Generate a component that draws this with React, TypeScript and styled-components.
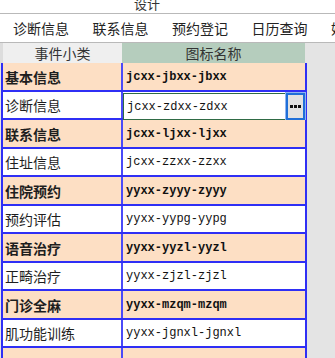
import React from "react";
import styled, { createGlobalStyle } from "styled-components";

const GlobalStyle = createGlobalStyle`
  html, body { margin: 0; padding: 0; background: #ffffff; }
  body { font-family: "Noto Sans CJK SC", "Noto Sans", sans-serif; }
  * { box-sizing: border-box; }
`;

const CJK = `"Noto Sans CJK SC", "Noto Sans", sans-serif`;
const MONO = `"Liberation Mono", "Noto Sans CJK SC", monospace`;
const BLUE = "#2f2ff5";
const PEACH = "#fddfc4";

const Frame = styled.div`
  width: 335px;
  height: 358px;
  overflow: hidden;
  display: flex;
  flex-direction: column;
  background: #ffffff;
`;

const TitleBar = styled.div`
  height: 14px;
  overflow: hidden;
  display: flex;
  justify-content: flex-start;
  padding-left: 134px;
  border-bottom: 1px solid #b9b9b9;
  background: #ffffff;
`;

const TitleText = styled.span`
  display: block;
  margin-top: -4px;
  font-family: ${CJK};
  font-size: 13px;
  line-height: 16px;
  color: #333333;
`;

const MenuBar = styled.div`
  height: 29px;
  display: flex;
  align-items: center;
  gap: 23.5px;
  padding-left: 13px;
  border-bottom: 1px solid #b9b9b9;
  white-space: nowrap;
  overflow: hidden;
  background: #ffffff;
`;

const MenuItem = styled.span`
  flex: none;
  font-family: ${CJK};
  font-size: 14px;
  line-height: 16px;
  color: #222222;
`;

const GridArea = styled.div`
  flex: 1;
  display: flex;
  background: #e4e4e4;
  overflow: hidden;
`;

const Table = styled.div`
  width: 307px;
  flex: none;
  display: flex;
  flex-direction: column;
`;

const HeaderRow = styled.div`
  height: 22px;
  display: grid;
  grid-template-columns: 122px 1fr;
`;

const HeaderCell = styled.div<{ $green?: boolean }>`
  display: flex;
  align-items: center;
  justify-content: center;
  font-family: ${CJK};
  font-size: 14px;
  color: #333333;
  background: ${(p) => (p.$green ? "#b5cdbd" : "#efefef")};
  border-left: ${(p) => (p.$green ? "none" : "3px solid #dddddd")};
  margin-right: ${(p) => (p.$green ? "2px" : "0")};
`;

const Row = styled.div<{ $tall: boolean; $hl: boolean }>`
  height: ${(p) => (p.$tall ? 29 : 28)}px;
  flex: none;
  display: grid;
  grid-template-columns: 120px 1fr;
  margin-left: 1px;
  background: ${(p) => (p.$hl ? PEACH : "#ffffff")};
  border-left: 2px solid ${BLUE};
  border-right: 2px solid ${BLUE};
  border-bottom: 2px solid ${BLUE};
`;

const NameCell = styled.div<{ $bold: boolean }>`
  display: flex;
  align-items: center;
  padding-left: 2px;
  font-family: ${CJK};
  font-size: 14px;
  font-weight: ${(p) => (p.$bold ? 700 : 400)};
  color: #1e1e1e;
  border-right: 2px solid #4a4af8;
  white-space: nowrap;
  overflow: hidden;
`;

const CodeCell = styled.div<{ $bold: boolean }>`
  display: flex;
  align-items: center;
  padding-left: 3px;
  font-family: ${MONO};
  font-size: 12px;
  font-weight: ${(p) => (p.$bold ? 700 : 400)};
  color: #111111;
  white-space: nowrap;
  overflow: hidden;
`;

const EditCell = styled.div`
  display: flex;
  align-items: stretch;
  padding: 1px 0 0 0;
  margin-bottom: -2px;
`;

const EditBox = styled.div`
  flex: 1;
  display: flex;
  align-items: center;
  padding-left: 3px;
  border: 1px solid #2f6b45;
  background: #ffffff;
  font-family: ${MONO};
  font-size: 12px;
  color: #111111;
  white-space: nowrap;
`;

const DotsButton = styled.div`
  width: 19px;
  flex: none;
  display: flex;
  align-items: center;
  justify-content: center;
  gap: 1px;
  background: #e2e2e2;
  border: 2px solid #1f6fd8;
  box-shadow: 0 0 0 1px #8fb4f0;
`;

const Dot = styled.span`
  width: 3px;
  height: 3px;
  background: #111111;
`;

const Side = styled.div`
  flex: 1;
  background: #e4e4e4;
`;

type Item = { name: string; code: string; hl: boolean; edit?: boolean };

const items: Item[] = [
  { name: "基本信息", code: "jcxx-jbxx-jbxx", hl: true },
  { name: "诊断信息", code: "jcxx-zdxx-zdxx", hl: false, edit: true },
  { name: "联系信息", code: "jcxx-ljxx-ljxx", hl: true },
  { name: "住址信息", code: "jcxx-zzxx-zzxx", hl: false },
  { name: "住院预约", code: "yyxx-zyyy-zyyy", hl: true },
  { name: "预约评估", code: "yyxx-yypg-yypg", hl: false },
  { name: "语音治疗", code: "yyxx-yyzl-yyzl", hl: true },
  { name: "正畸治疗", code: "yyxx-zjzl-zjzl", hl: false },
  { name: "门诊全麻", code: "yyxx-mzqm-mzqm", hl: true },
  { name: "肌功能训练", code: "yyxx-jgnxl-jgnxl", hl: false },
  { name: "", code: "", hl: true },
];

const menu = ["诊断信息", "联系信息", "预约登记", "日历查询", "娱乐"];

export default function App() {
  return (
    <>
      <GlobalStyle />
      <Frame>
        <TitleBar>
          <TitleText>设计</TitleText>
        </TitleBar>
        <MenuBar>
          {menu.map((m) => (
            <MenuItem key={m}>{m}</MenuItem>
          ))}
        </MenuBar>
        <GridArea>
          <Table>
            <HeaderRow>
              <HeaderCell>事件小类</HeaderCell>
              <HeaderCell $green>图标名称</HeaderCell>
            </HeaderRow>
            {items.map((it, i) => (
              <Row key={i} $tall={i % 2 === 0} $hl={it.hl}>
                <NameCell $bold={it.hl}>{it.name}</NameCell>
                {it.edit ? (
                  <EditCell>
                    <EditBox>{it.code}</EditBox>
                    <DotsButton>
                      <Dot />
                      <Dot />
                      <Dot />
                    </DotsButton>
                  </EditCell>
                ) : (
                  <CodeCell $bold={it.hl}>{it.code}</CodeCell>
                )}
              </Row>
            ))}
          </Table>
          <Side />
        </GridArea>
      </Frame>
    </>
  );
}
